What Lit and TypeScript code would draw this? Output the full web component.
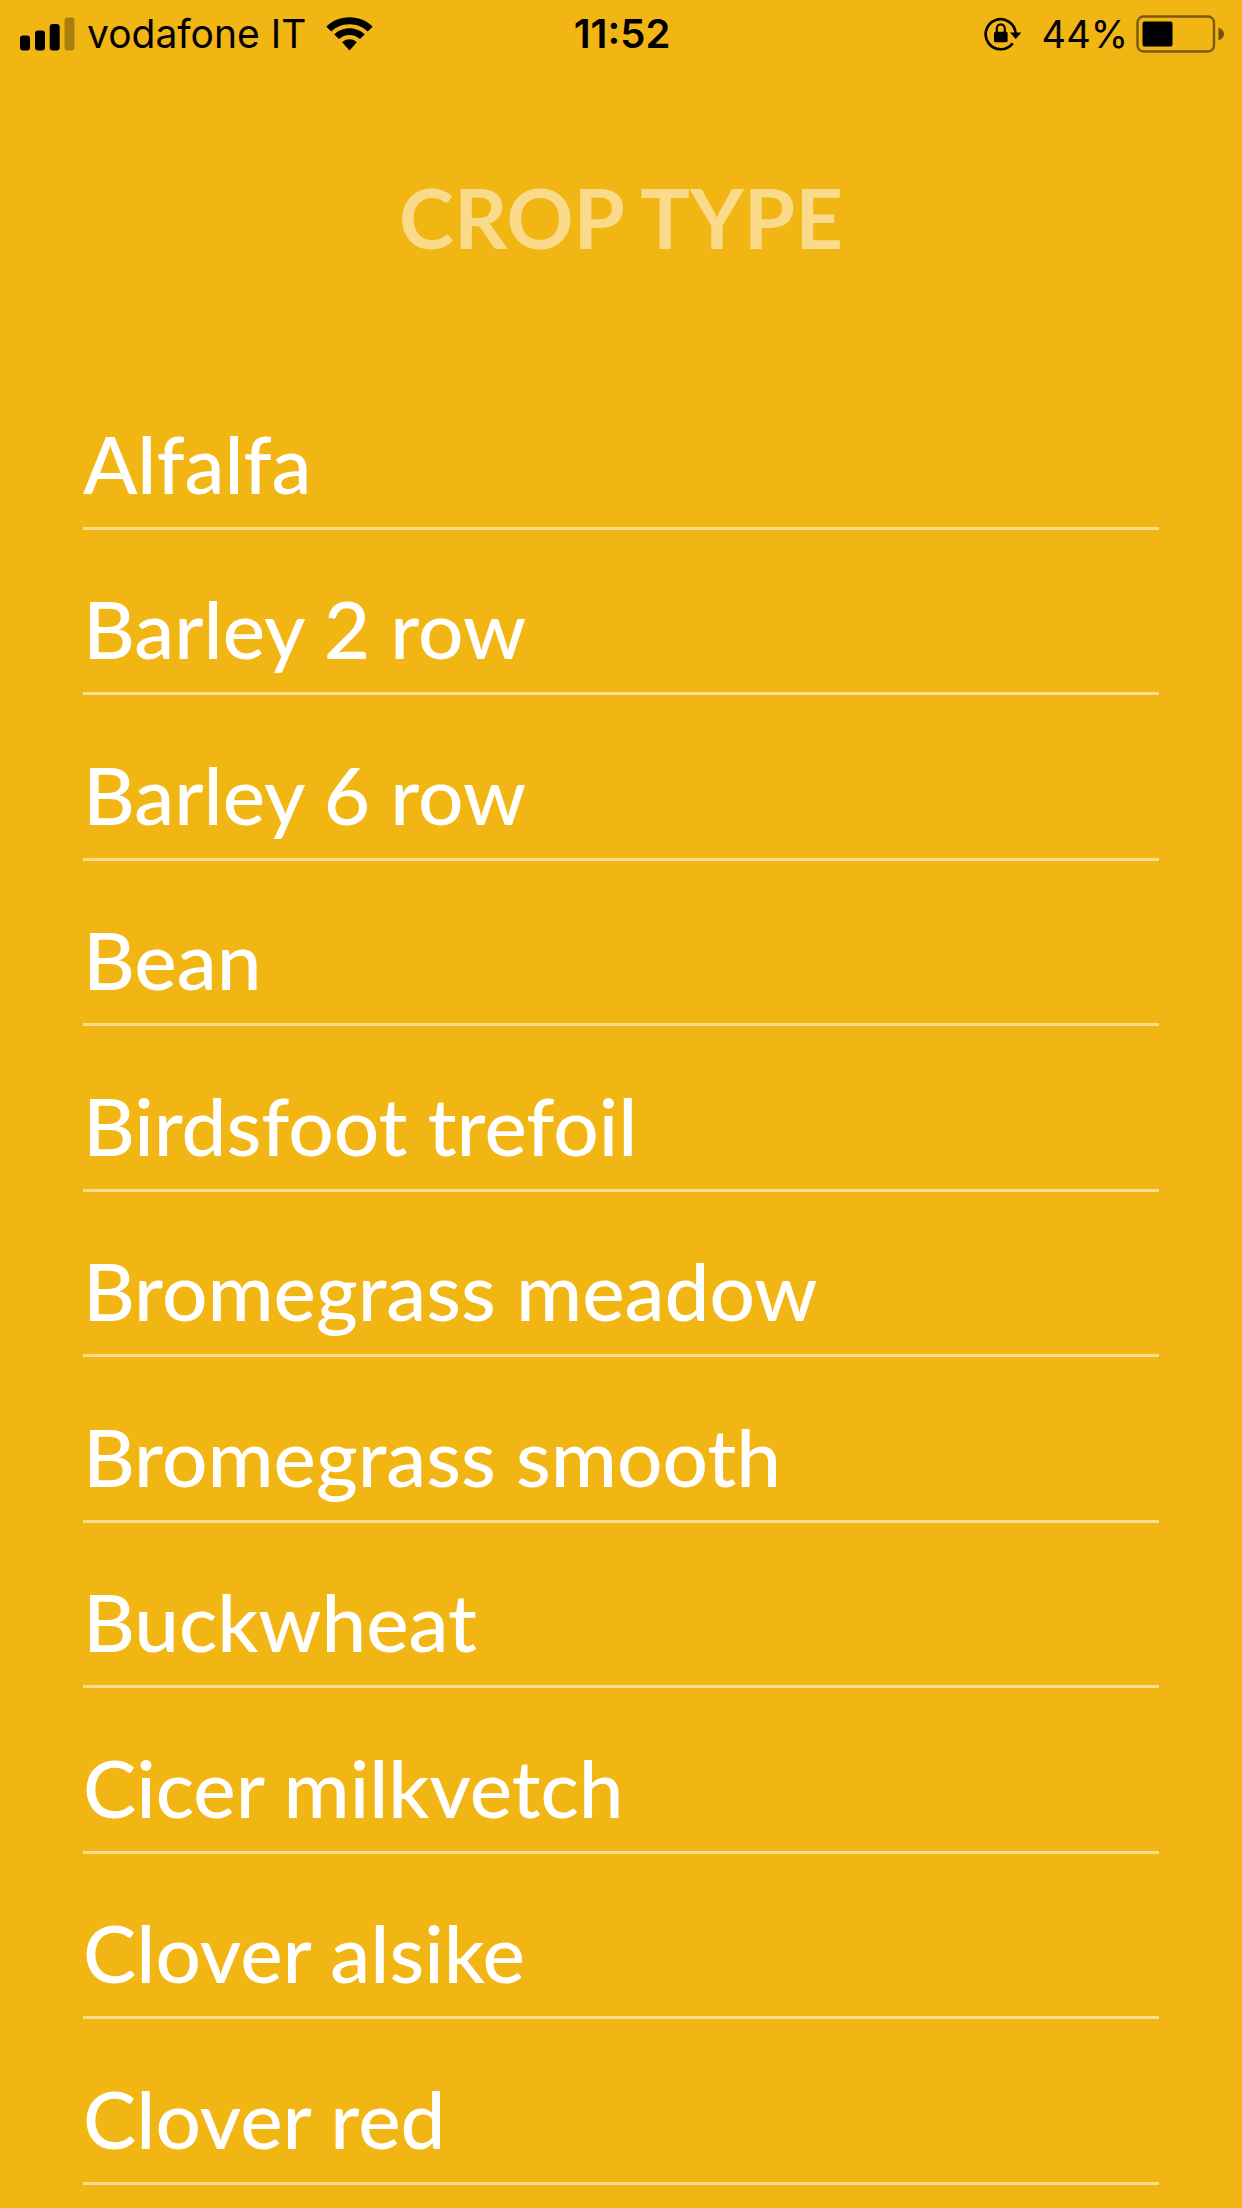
import { LitElement, html, css } from "lit";
import { customElement, state } from "lit/decorators.js";

const CROPS = [
  "Alfalfa",
  "Barley 2 row",
  "Barley 6 row",
  "Bean",
  "Birdsfoot trefoil",
  "Bromegrass meadow",
  "Bromegrass smooth",
  "Buckwheat",
  "Cicer milkvetch",
  "Clover alsike",
  "Clover red",
];

@customElement("status-bar")
class StatusBar extends LitElement {
  static styles = css`
    :host {
      display: grid;
      grid-template-columns: 1fr auto 1fr;
      align-items: center;
      height: 68px;
      padding: 0 18px 0 20px;
      color: #000;
      font: 400 39px/48px Inter, "Liberation Sans", sans-serif;
    }
    .side {
      display: flex;
      align-items: center;
    }
    .end {
      justify-content: flex-end;
    }
    .carrier {
      margin: 0 20px 0 12px;
    }
    .time {
      font-size: 40px;
      font-weight: 600;
    }
    .percent {
      margin: 0 8px 0 20px;
      font-size: 38px;
    }
    svg {
      display: block;
      flex: none;
    }
  `;

  render() {
    return html`
      <div class="side">
        <svg width="55" height="34" viewBox="0 0 55 34" role="img" aria-label="Signal">
          <rect x="0" y="18.5" width="10" height="15" rx="3" />
          <rect x="15" y="13.5" width="10" height="20" rx="3" />
          <rect x="29.7" y="7" width="10" height="26.5" rx="3" />
          <rect x="44.5" y="0.5" width="10" height="33" rx="3" opacity="0.3" />
        </svg>
        <span class="carrier">vodafone IT</span>
        <svg width="47" height="34" viewBox="0 0 47 34" role="img" aria-label="Wi-Fi">
          <path d="M0.4 9.7C6 3.7 14.2 0.2 23.5 0.2S41 3.7 46.6 9.7L41.7 14.6C37.2 9.9 30.7 7.2 23.5 7.2S9.8 9.9 5.3 14.6Z" />
          <path d="M8.3 17.4C12.2 13.5 17.5 11.2 23.5 11.2S34.8 13.5 38.7 17.4L34 22.1C31.2 19.4 27.6 17.9 23.5 17.9S15.8 19.4 13 22.1Z" />
          <path d="M16.2 25.2C18.1 23.3 20.7 22.3 23.5 22.3S28.9 23.3 30.8 25.2L23.5 33.6Z" />
        </svg>
      </div>
      <span class="time">11:52</span>
      <div class="side end">
        <svg width="38" height="34" viewBox="0 0 38 34" role="img" aria-label="Rotation lock">
          <path d="M28.7 26.2A15 15 0 1 1 31.6 16" fill="none" stroke="#000" stroke-width="2.7" />
          <path d="M26 15.6H37.4L31.7 22Z" />
          <rect x="10" y="14.8" width="13.6" height="10.4" rx="1.5" />
          <path d="M12.8 15.5V11.6A4 4.2 0 0 1 20.8 11.6V15.5" fill="none" stroke="#000" stroke-width="2.2" />
        </svg>
        <span class="percent">44%</span>
        <svg width="88" height="38" viewBox="0 0 88 38" role="img" aria-label="Battery">
          <rect x="1.5" y="1.5" width="76.5" height="35" rx="6" fill="none" stroke="#000" stroke-opacity="0.5" stroke-width="2.4" />
          <rect x="6.5" y="6.5" width="30" height="25" rx="2" />
          <path d="M82.5 12.5C86 14 88 16.2 88 19S86 24 82.5 25.5Z" opacity="0.55" />
        </svg>
      </div>
    `;
  }
}

@customElement("app-root")
class AppRoot extends LitElement {
  static styles = css`
    :host {
      display: flex;
      flex-direction: column;
      box-sizing: border-box;
      min-height: 100vh;
      padding-bottom: 23px;
      background: #f1b514;
      color: #fff;
      font-family: Lato, "Liberation Sans", sans-serif;
    }
    .title {
      margin: 0;
      padding: 99px 84px 97px;
      color: #f9db8b;
      font-size: 83px;
      font-weight: 700;
      line-height: 100px;
      text-align: center;
    }
    .list {
      flex: 1;
      display: flex;
      flex-direction: column;
      margin: 0;
      padding: 0 83px;
      list-style: none;
    }
    .row {
      flex: 1;
      display: flex;
      border-bottom: 3px solid #f9dc8e;
    }
    .crop {
      flex: 1;
      display: flex;
      align-items: flex-end;
      margin: 0;
      padding: 32px 0 16px;
      border: 0;
      background: none;
      color: inherit;
      font: 500 80px/96px Lato, "Liberation Sans", sans-serif;
      text-align: left;
      cursor: pointer;
    }
  `;

  @state() private selected = "";

  render() {
    return html`
      <status-bar></status-bar>
      <h1 class="title">CROP TYPE</h1>
      <ul class="list">
        ${CROPS.map(
          (crop) => html`<li class="row">
            <button
              class="crop"
              type="button"
              aria-pressed=${this.selected === crop ? "true" : "false"}
              @click=${() => (this.selected = crop)}
            >${crop}</button>
          </li>`
        )}
      </ul>
    `;
  }
}
